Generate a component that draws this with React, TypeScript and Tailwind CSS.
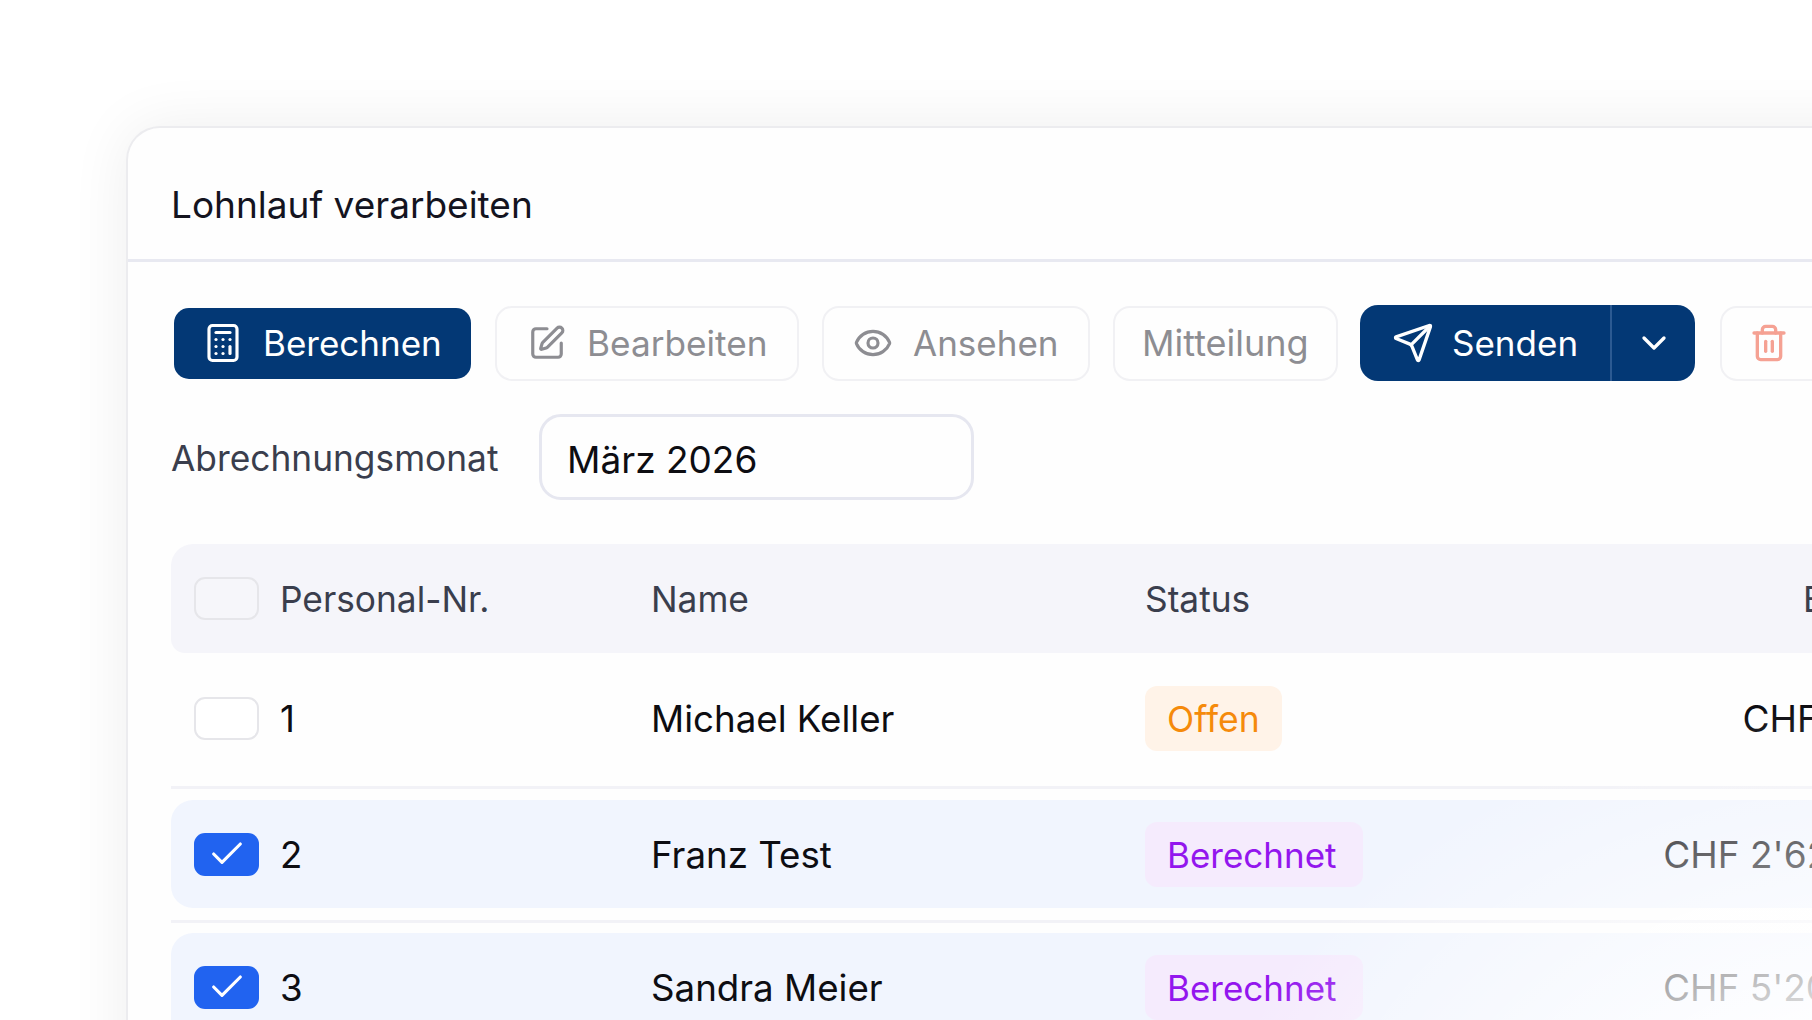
import { Calculator, SquarePen, Eye, Send, ChevronDown, Trash2, Check } from "lucide-react";

function Box({ checked, header }: { checked?: boolean; header?: boolean }) {
  if (checked) {
    return (
      <div className="flex h-[43px] w-[65px] shrink-0 items-center justify-center rounded-[11px] bg-[#2163f0]">
        <Check size={40} strokeWidth={1.9} className="text-white" />
      </div>
    );
  }
  return (
    <div
      className={
        header
          ? "h-[43px] w-[65px] shrink-0 rounded-[11px] border-2 border-[#e6e6ea] bg-[#f6f6fa]"
          : "h-[43px] w-[65px] shrink-0 rounded-[11px] border-2 border-[#e6e6ea] bg-white"
      }
    />
  );
}

function Cells({
  no,
  name,
  status,
  amount,
  checked,
}: {
  no: string;
  name: string;
  status: "Offen" | "Berechnet";
  amount: string;
  checked: boolean;
}) {
  return (
    <>
      <div className="flex w-[109px] shrink-0 items-center pl-[23px]">
        <Box checked={checked} />
      </div>
      <div className="w-[371px] shrink-0 pt-[2px] text-[36.7px] text-[#0d0d12]">{no}</div>
      <div className="w-[494px] shrink-0 pt-[2px] text-[36.7px] text-[#0d0d12]">{name}</div>
      <div className="flex w-[763px] shrink-0 items-center justify-between">
        {status === "Offen" ? (
          <span className="flex h-[65px] items-center rounded-[12px] bg-[#fff3e8] pl-[22px] pr-[22px] pt-[4px] text-[35.5px] text-[#f58a0b]">Offen</span>
        ) : (
          <span className="flex h-[65px] items-center rounded-[12px] bg-[#f5ebfd] pl-[22px] pr-[26px] pt-[2px] text-[35px] text-[#9316ee]">Berechnet</span>
        )}
        <span className="whitespace-nowrap pt-[2px] text-[37px] text-[#0d0d12]">{amount}</span>
      </div>
    </>
  );
}

export default function App() {
  return (
    <div className="relative h-[1020px] w-[1812px] overflow-hidden bg-white pl-[126px] pt-[126px] font-['Inter',sans-serif]">
      <div className="h-[1000px] w-[1820px] rounded-tl-[34px] border-l-2 border-t-2 border-[#ececef] bg-[#fefefe] text-[35px] shadow-[0_0_60px_rgba(0,0,0,0.07)]">
        <div className="flex h-[134px] items-center border-b-[3px] border-[#e8e9f1] pl-[43px] pt-[23px]">
          <h1 className="text-[37px] font-normal text-[#14141f]">Lohnlauf verarbeiten</h1>
        </div>

        <div className="mt-[43px] flex h-[76px] items-center pl-[46px]">
          <button className="flex h-[71px] w-[297px] items-center gap-[19px] rounded-[15px] bg-[#033875] pl-[28px] text-white">
            <Calculator size={42} strokeWidth={1.8} />
            Berechnen
          </button>
          <button className="ml-[24px] flex h-[75px] w-[304px] items-center gap-[21px] rounded-[17px] border-2 border-[#f1f1f4] pl-[31px] text-[35.2px] text-[#8d8d92]">
            <SquarePen size={38} strokeWidth={2} />
            Bearbeiten
          </button>
          <button className="ml-[23px] flex h-[75px] w-[268px] items-center gap-[20px] rounded-[17px] border-2 border-[#f1f1f4] pl-[29px] text-[#8d8d92]">
            <Eye size={40} strokeWidth={1.9} />
            Ansehen
          </button>
          <button className="ml-[23px] flex h-[75px] w-[225px] items-center rounded-[17px] border-2 border-[#f1f1f4] pl-[27px] text-[36px] text-[#8d8d92]">
            Mitteilung
          </button>
          <div className="ml-[22px] flex h-[76px] w-[335px] items-center rounded-[18px] bg-[#033875] text-white">
            <div className="flex h-full w-[252px] items-center gap-[18px] border-r-2 border-[#2c5a92] pl-[32px]">
              <Send size={42} strokeWidth={1.9} />
              Senden
            </div>
            <div className="flex flex-1 items-center justify-center">
              <ChevronDown size={40} strokeWidth={2} />
            </div>
          </div>
          <button className="ml-[25px] flex h-[75px] w-[200px] items-center rounded-[17px] border-2 border-[#f1f1f4] pl-[27px] text-[#f5a193]">
            <Trash2 size={40} strokeWidth={2} />
          </button>
        </div>

        <div className="mt-[33px] flex h-[86px] items-center pl-[43px]">
          <label className="w-[368px] pt-[4px] text-[35.3px] text-[#3a3e4d]">Abrechnungsmonat</label>
          <div className="flex h-[86px] w-[435px] items-center rounded-[22px] border-[3px] border-[#e6e7f0] pl-[25px] pt-[6px] text-[37px] text-[#0d0d12]">
            März 2026
          </div>
        </div>

        <div className="ml-[43px] mt-[44px]">
          <div className="flex h-[109px] items-center rounded-tl-[22px] rounded-bl-[14px] bg-[#f5f5fa] text-[35.3px] text-[#3a3e4d]">
            <div className="flex w-[109px] shrink-0 items-center pl-[23px]">
              <Box header />
            </div>
            <div className="w-[371px] shrink-0 pt-[4px]">Personal-Nr.</div>
            <div className="w-[494px] shrink-0 pt-[4px]">Name</div>
            <div className="flex w-[768px] shrink-0 items-center justify-between pt-[4px]">
              <span>Status</span>
              <span>Betrag</span>
            </div>
          </div>

          <div className="flex h-[136px] items-center border-b-[3px] border-[#f2f2f7] pb-[3px]">
            <Cells no="1" name="Michael Keller" status="Offen" amount="CHF 0.00" checked={false} />
          </div>

          <div className="mt-[11px] flex h-[108px] items-center rounded-l-[22px] bg-[#f1f5fe]">
            <Cells no="2" name="Franz Test" status="Berechnet" amount="CHF 2'620.00" checked />
          </div>

          <div className="mt-[12px] h-[3px] bg-[#f2f2f7]" />

          <div className="mt-[10px] flex h-[108px] items-center rounded-l-[22px] bg-[#f1f5fe]">
            <Cells no="3" name="Sandra Meier" status="Berechnet" amount="CHF 5'200.00" checked />
          </div>
        </div>
      </div>

      <div className="pointer-events-none absolute inset-0 bg-[radial-gradient(ellipse_700px_500px_at_1900px_1200px,#ffffff_30%,rgba(255,255,255,0)_100%)]" />
    </div>
  );
}
